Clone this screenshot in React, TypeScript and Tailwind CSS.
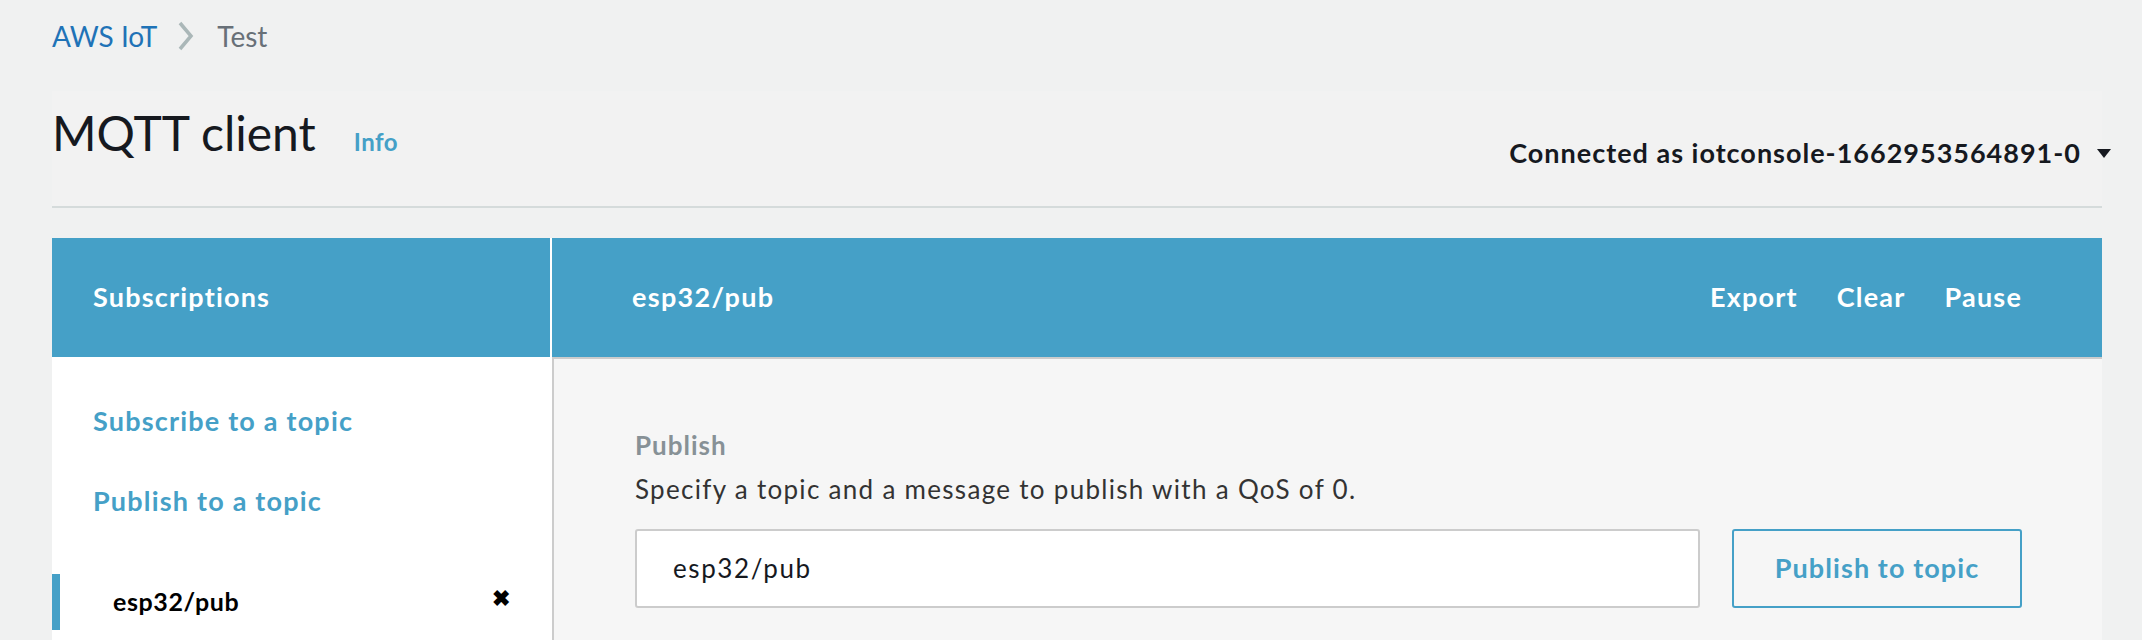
import React from "react";

export default function App() {
  return (
    <div className="min-h-screen w-full bg-[#f0f1f1] pl-[52px] pr-[40px] font-['Lato',sans-serif] text-[#16191f]">
      {/* Breadcrumb */}
      <nav className="flex h-[72px] items-center text-[28px] leading-none">
        <span className="text-[#1f73b7]">AWS IoT</span>
        <svg className="ml-[20px] mr-[22px]" width="18" height="30" viewBox="0 0 18 30">
          <path d="M3 2 L14 15 L3 28" fill="none" stroke="#aab7b8" strokeWidth="3.5" />
        </svg>
        <span className="text-[#687078]">Test</span>
      </nav>

      {/* Title band */}
      <div className="mt-[19px] flex h-[117px] items-start justify-between border-b-2 border-[#d5dbdb] bg-[#f2f2f2]">
        <div className="mt-[12px] flex items-baseline">
          <h1 className="text-[48px] font-normal leading-[60px] text-[#16191f]">MQTT client</h1>
          <span className="ml-[38px] text-[24px] font-bold tracking-[0.5px] text-[#45a0c7]">Info</span>
        </div>
        <div className="-mr-[9px] mt-[42px] flex items-center">
          <span className="text-[27px] font-bold tracking-[1px] text-[#16191f]">Connected as iotconsole-1662953564891-0</span>
          <svg className="ml-[16px]" width="14" height="9" viewBox="0 0 14 9">
            <path d="M0 0 H14 L7 9 Z" fill="#16191f" />
          </svg>
        </div>
      </div>

      {/* Panels */}
      <div className="mt-[30px] flex">
        {/* Left */}
        <div className="w-[500px] shrink-0 bg-white">
          <div className="mr-[2px] flex h-[119px] items-center bg-[#45a0c7] pl-[41px]">
            <span className="text-[27px] font-bold tracking-[1.2px] text-white">Subscriptions</span>
          </div>
          <div className="flex flex-col pt-[24px]">
            <a className="pl-[41px] text-[27px] font-bold leading-[80px] tracking-[1.2px] text-[#45a0c7]">Subscribe to a topic</a>
            <a className="pl-[41px] text-[27px] font-bold leading-[80px] tracking-[1.2px] text-[#45a0c7]">Publish to a topic</a>
            <div className="mt-[33px] flex h-[56px] items-center border-l-8 border-[#45a0c7] pl-[53px] pr-[42px]">
              <span className="flex-1 text-[25px] font-bold tracking-[0.6px] text-black">esp32/pub</span>
              <span className="mb-[10px] text-[22px] font-bold text-black">✖</span>
            </div>
          </div>
        </div>

        {/* Right */}
        <div className="flex-1">
          <div className="flex h-[121px] items-center justify-between border-b-2 border-[#cccccc] bg-[#45a0c7] pl-[80px] pr-[80px]">
            <span className="text-[27px] font-bold tracking-[1.3px] text-white">esp32/pub</span>
            <div className="flex items-center gap-[39px] text-[27px] font-bold tracking-[1.2px] text-white">
              <span>Export</span>
              <span>Clear</span>
              <span>Pause</span>
            </div>
          </div>
          <div className="h-[300px] border-l-2 border-[#cccccc] bg-[#f6f6f6] pl-[81px] pr-[80px] pt-[68px]">
            <div className="text-[26px] font-bold leading-[36px] tracking-[1px] text-[#879196]">Publish</div>
            <div className="mt-[8px] text-[26px] leading-[36px] tracking-[1.3px] text-[#333333]">
              Specify a topic and a message to publish with a QoS of 0.
            </div>
            <div className="mt-[22px] flex gap-[32px]">
              <div className="flex h-[79px] flex-1 items-center rounded-[3px] border-2 border-[#cccccc] bg-white pl-[36px] text-[26px] tracking-[1.6px] text-[#16191f]">
                esp32/pub
              </div>
              <button className="h-[79px] w-[290px] rounded-[3px] border-2 border-[#45a0c7] bg-[#f6f6f6] text-[27px] font-bold tracking-[1.1px] text-[#45a0c7]">
                Publish to topic
              </button>
            </div>
          </div>
        </div>
      </div>
    </div>
  );
}
